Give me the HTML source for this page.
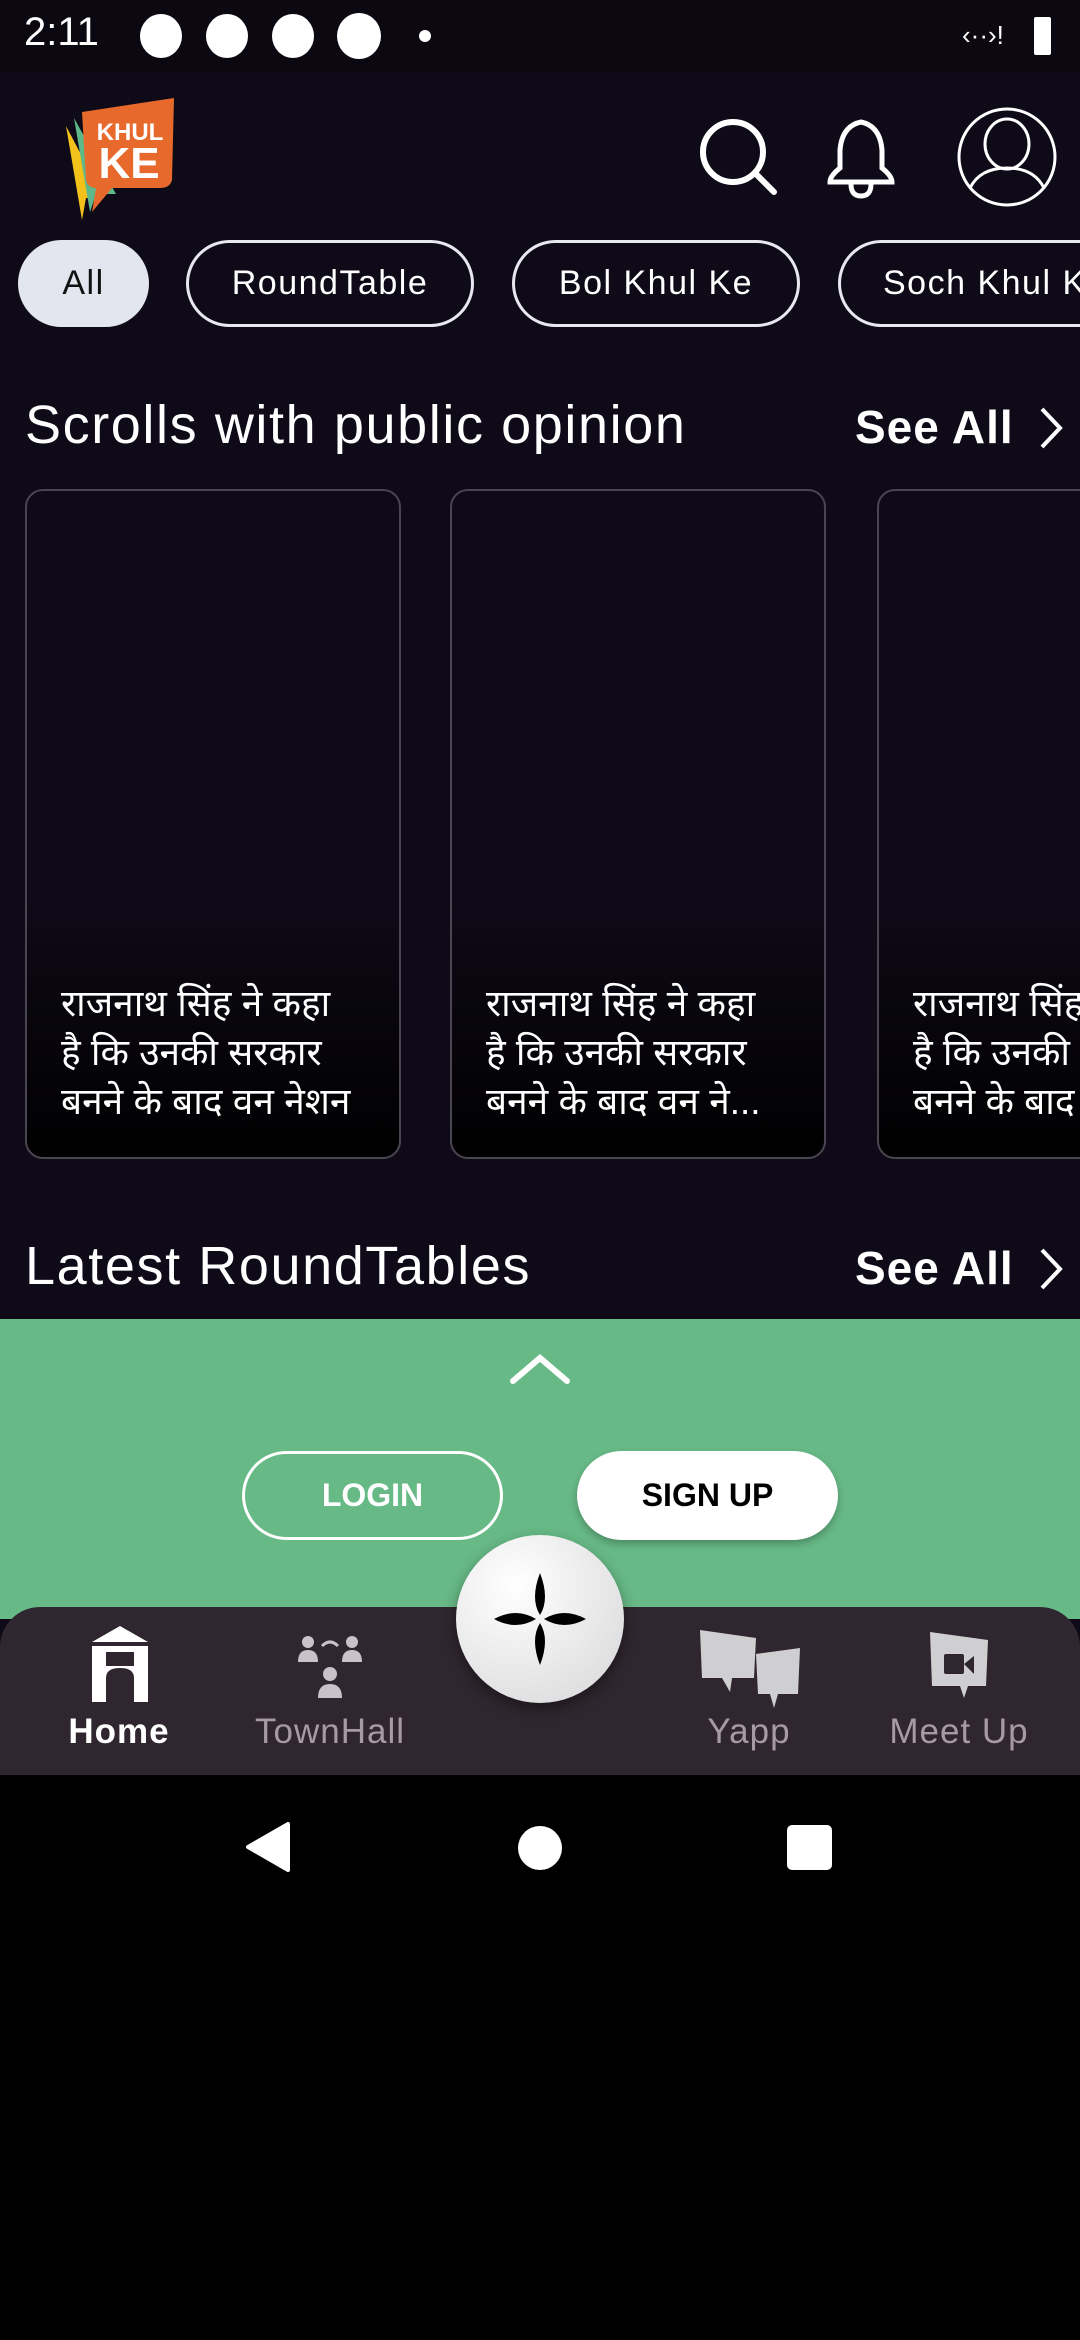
<!DOCTYPE html>
<html><head><meta charset="utf-8"><style>
*{margin:0;padding:0;box-sizing:border-box}
body{width:1080px;height:2340px;background:#000;font-family:"Liberation Sans",sans-serif;position:relative;overflow:hidden;color:#fff}
.abs{position:absolute}
#app{position:absolute;left:0;top:0;width:1080px;height:1775px;background:#0f0a18;overflow:hidden}
#status{position:absolute;left:0;top:0;width:1080px;height:72px;background:#0b0812}
.chip{position:absolute;top:240px;height:87px;border:3px solid #e8e8f0;border-radius:44px;font-size:34px;line-height:81px;text-align:center;color:#fff;letter-spacing:1.5px;white-space:nowrap}
.card{position:absolute;top:489px;width:376px;height:670px;border:2px solid #4a4550;border-radius:18px;background:linear-gradient(#0f0a18 60%,#000);overflow:hidden}
.card p{position:absolute;left:34px;top:488px;font-size:37px;line-height:49px;white-space:nowrap;font-family:"Liberation Sans",sans-serif}
h2{position:absolute;font-weight:normal;font-size:54px;color:#fff;white-space:nowrap;letter-spacing:1.6px}
.see{position:absolute;left:855px;font-size:46px;font-weight:bold;letter-spacing:1px}
.lbl{position:absolute;top:1712px;font-size:35px;color:#a59aa6;text-align:center;width:200px;letter-spacing:1px}
</style></head><body>
<div id="app">
<div id="status">
 <div class="abs" style="left:24px;top:10px;font-size:40px">2:11</div>
 <div class="abs" style="left:140px;top:14px;width:42px;height:44px;border-radius:50%;background:#fff"></div>
 <div class="abs" style="left:206px;top:14px;width:42px;height:44px;border-radius:50%;background:#fff"></div>
 <div class="abs" style="left:272px;top:14px;width:42px;height:44px;border-radius:50%;background:#fff"></div>
 <div class="abs" style="left:337px;top:13px;width:44px;height:46px;border-radius:50%;background:#fff"></div>
 <div class="abs" style="left:419px;top:30px;width:12px;height:12px;border-radius:50%;background:#fff"></div>
 <div class="abs" style="left:962px;top:20px;font-size:26px">‹··›!</div>
 <div class="abs" style="left:1034px;top:17px;width:17px;height:38px;background:#fff;border-radius:2px"></div>
</div>
<svg class="abs" style="left:60px;top:94px" width="120" height="128" viewBox="0 0 120 128">
 <path d="M6 32 L22 126 L26 104 L44 104 Z" fill="#f2c21b"/>
 <path d="M14 24 L30 118 L36 100 L56 100 Z" fill="#5fb88a"/>
 <path d="M22 18 L114 4 L112 86 Q110 94 100 94 L52 94 L32 118 L36 94 Q28 94 26 86 Z" fill="#e8692c"/>
 <text x="70" y="46" font-family="Liberation Sans" font-weight="bold" font-size="24" fill="#fff" text-anchor="middle">KHUL</text>
 <text x="69" y="84" font-family="Liberation Sans" font-weight="bold" font-size="44" fill="#fff" text-anchor="middle">KE</text>
</svg>
<svg class="abs" style="left:696px;top:112px" width="86" height="86" viewBox="0 0 86 86" fill="none" stroke="#fff" stroke-width="6" stroke-linecap="round">
 <circle cx="37" cy="40" r="30"/><line x1="60" y1="62" x2="78" y2="80"/>
</svg>
<svg class="abs" style="left:824px;top:118px" width="74" height="82" viewBox="0 0 74 82" fill="none" stroke="#fff" stroke-width="5">
 <path d="M37 4 Q18 8 16 32 L16 50 Q6 58 6 64 L68 64 Q68 58 58 50 L58 32 Q56 8 37 4Z"/><path d="M27 66 Q27 78 37 78 Q47 78 47 66"/>
</svg>
<svg class="abs" style="left:956px;top:106px" width="102" height="102" viewBox="0 0 102 102" fill="none" stroke="#fff" stroke-width="3">
 <circle cx="51" cy="51" r="48"/><ellipse cx="51" cy="38" rx="22" ry="25"/><path d="M14 82 Q24 62 51 62 Q78 62 88 82"/>
</svg>
<div class="chip" style="left:18px;width:131px;background:#e4e6ef;color:#111;border-color:#e4e6ef">All</div>
<div class="chip" style="left:186px;width:288px">RoundTable</div>
<div class="chip" style="left:512px;width:288px">Bol Khul Ke</div>
<div class="chip" style="left:838px;width:300px;text-align:left;padding-left:42px">Soch Khul Ke</div>
<h2 style="left:25px;top:394px">Scrolls with public opinion</h2>
<div class="see" style="top:400px">See All</div>
<svg class="abs" style="left:1036px;top:405px" width="30" height="46" viewBox="0 0 30 46" fill="none" stroke="#fff" stroke-width="4"><path d="M6 4 L24 23 L6 42"/></svg>
<div class="card" style="left:25px"><p>राजनाथ सिंह ने कहा<br>है कि उनकी सरकार<br>बनने के बाद वन नेशन</p></div>
<div class="card" style="left:450px"><p>राजनाथ सिंह ने कहा<br>है कि उनकी सरकार<br>बनने के बाद वन ने...</p></div>
<div class="card" style="left:877px"><p>राजनाथ सिंह ने कहा<br>है कि उनकी सरकार<br>बनने के बाद वन नेशन</p></div>
<h2 style="left:25px;top:1235px">Latest RoundTables</h2>
<div class="see" style="top:1241px">See All</div>
<svg class="abs" style="left:1036px;top:1246px" width="30" height="46" viewBox="0 0 30 46" fill="none" stroke="#fff" stroke-width="4"><path d="M6 4 L24 23 L6 42"/></svg>
<div class="abs" style="left:0;top:1319px;width:1080px;height:300px;background:#67b986"></div>
<svg class="abs" style="left:508px;top:1352px" width="64" height="34" viewBox="0 0 64 34" fill="none" stroke="#fff" stroke-width="6" stroke-linecap="round"><path d="M5 29 L32 6 L59 29"/></svg>
<div class="abs" style="left:242px;top:1451px;width:261px;height:89px;border:3px solid #fff;border-radius:45px;font-size:32px;font-weight:bold;text-align:center;line-height:83px">LOGIN</div>
<div class="abs" style="left:577px;top:1451px;width:261px;height:89px;background:#fff;border-radius:45px;font-size:32px;font-weight:bold;text-align:center;line-height:89px;color:#000;box-shadow:0 4px 8px rgba(0,0,0,.25)">SIGN UP</div>
<div class="abs" style="left:0;top:1607px;width:1080px;height:168px;background:#30262f;border-radius:40px 40px 0 0"></div>
<svg class="abs" style="left:88px;top:1626px" width="64" height="76" viewBox="0 0 64 76"><path d="M32 0 L60 16 L4 16Z" fill="#fff"/><path d="M4 20 L60 20 L60 76 L46 76 L46 52 Q46 42 32 42 Q18 42 18 52 L18 76 L4 76Z M18 26 L18 40 L46 40 L46 26Z" fill="#fff" fill-rule="evenodd"/></svg>
<svg class="abs" style="left:296px;top:1632px" width="70" height="70" viewBox="0 0 70 70" fill="#c9c3c9"><circle cx="12" cy="10" r="6"/><path d="M2 30 Q2 18 12 18 Q22 18 22 30Z"/><circle cx="56" cy="10" r="6"/><path d="M46 30 Q46 18 56 18 Q66 18 66 30Z"/><circle cx="34" cy="42" r="7"/><path d="M22 66 Q22 52 34 52 Q46 52 46 66Z"/><path d="M26 14 Q34 6 42 14" fill="none" stroke="#c9c3c9" stroke-width="3"/></svg>
<svg class="abs" style="left:698px;top:1628px" width="104" height="82" viewBox="0 0 104 82" fill="#cfcfd2"><path d="M2 2 L58 10 L56 50 L34 50 L32 64 L24 50 L4 50Z"/><path d="M58 26 L102 20 L100 66 L80 66 L76 80 L72 66 L60 66Z"/></svg>
<svg class="abs" style="left:928px;top:1630px" width="62" height="80" viewBox="0 0 62 80"><path d="M2 2 L60 10 L58 56 L40 56 L36 68 L32 56 L4 56Z" fill="#cfcfd2"/><rect x="16" y="24" width="20" height="20" rx="2" fill="#30262f"/><path d="M36 34 L46 26 L46 44Z" fill="#30262f"/></svg>
<div class="lbl" style="left:19px;color:#fff;font-weight:bold">Home</div>
<div class="lbl" style="left:230px">TownHall</div>
<div class="lbl" style="left:649px">Yapp</div>
<div class="lbl" style="left:859px">Meet Up</div>
<div class="abs" style="left:456px;top:1535px;width:168px;height:168px;border-radius:50%;background:radial-gradient(circle at 35% 30%,#fff,#d6d6d8);box-shadow:0 6px 14px rgba(0,0,0,.4)"></div>
<svg class="abs" style="left:490px;top:1569px" width="100" height="100" viewBox="0 0 100 100" fill="#000"><path d="M50 4 Q60 30 50 46 Q40 30 50 4Z"/><path d="M50 96 Q60 70 50 54 Q40 70 50 96Z"/><path d="M4 50 Q26 38 46 50 Q26 62 4 50Z"/><path d="M96 50 Q74 38 54 50 Q74 62 96 50Z"/></svg>
</div>
<svg class="abs" style="left:244px;top:1822px" width="48" height="50" viewBox="0 0 48 50"><path d="M44 2 L44 48 L4 25Z" fill="#fff" stroke="#fff" stroke-width="4" stroke-linejoin="round"/></svg>
<div class="abs" style="left:518px;top:1826px;width:44px;height:44px;border-radius:50%;background:#fff"></div>
<div class="abs" style="left:787px;top:1825px;width:45px;height:45px;border-radius:5px;background:#fff"></div>
</body></html>
